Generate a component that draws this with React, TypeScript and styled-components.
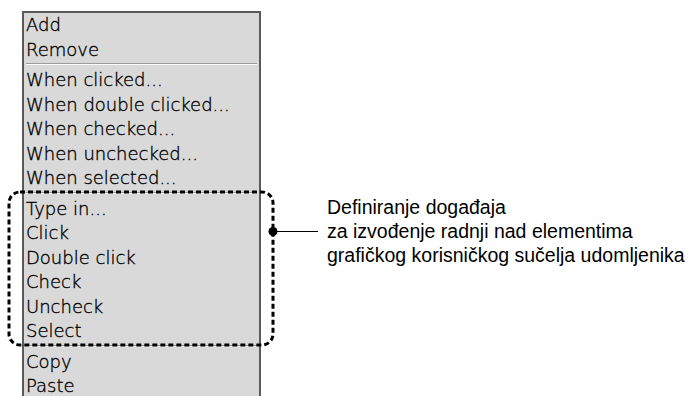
import styled, { createGlobalStyle } from 'styled-components';

const GlobalStyle = createGlobalStyle`
  html, body {
    margin: 0;
    padding: 0;
    background: #fff;
  }
  body {
    width: 694px;
    height: 396px;
    overflow: hidden;
  }
`;

type Entry = { label: string } | { separator: true };

const entries: Entry[] = [
  { label: 'Add' },
  { label: 'Remove' },
  { separator: true },
  { label: 'When clicked...' },
  { label: 'When double clicked...' },
  { label: 'When checked...' },
  { label: 'When unchecked...' },
  { label: 'When selected...' },
  { separator: true },
  { label: 'Type in...' },
  { label: 'Click' },
  { label: 'Double click' },
  { label: 'Check' },
  { label: 'Uncheck' },
  { label: 'Select' },
  { separator: true },
  { label: 'Copy' },
  { label: 'Paste' },
];

const App = () => {
  return (
    <>
      <GlobalStyle />
      <Page>
        <Menu>
          {entries.map((entry, i) =>
            'separator' in entry ? (
              <Separator key={i} />
            ) : (
              <MenuItem key={i}>{entry.label}</MenuItem>
            )
          )}
        </Menu>

        <GroupOutline width="268" height="157" viewBox="0 0 268 157">
          <rect
            x="2"
            y="2"
            width="264"
            height="153"
            rx="11"
            ry="11"
            fill="none"
            stroke="#000"
            strokeWidth="3"
            strokeDasharray="5 3"
          />
        </GroupOutline>

        <Note>
          <Connector width="50" height="11" viewBox="0 0 50 11">
            <circle cx="5" cy="5.5" r="4.5" fill="#000" />
            <line x1="5" y1="5.5" x2="50" y2="5.5" stroke="#000" strokeWidth="1" />
          </Connector>
          <NoteText>
            Definiranje događaja
            <br />
            za izvođenje radnji nad elementima
            <br />
            grafičkog korisničkog sučelja udomljenika
          </NoteText>
        </Note>
      </Page>
    </>
  );
};

export default App;

const Page = styled.div`
  position: relative;
  display: flex;
  align-items: flex-start;
  width: 694px;
  height: 396px;
  overflow: hidden;
`;

const Menu = styled.div`
  box-sizing: border-box;
  width: 239px;
  height: 385px;
  margin: 11px 0 0 22px;
  display: flex;
  flex-direction: column;
  background: #d9d9d9;
  border: 2px solid #5a5a5a;
  border-bottom: none;
  font-family: 'DejaVu Sans', sans-serif;
  font-weight: 200;
  font-size: 18px;
  color: #000;
  -webkit-text-stroke: 0.35px #000;
`;

const MenuItem = styled.div`
  flex: none;
  height: 24.5px;
  line-height: 24.5px;
  padding-left: 2px;
  white-space: nowrap;
`;

const Separator = styled.div`
  flex: none;
  height: 6px;
  margin: 0 2px;
  box-sizing: border-box;
  padding-top: 1px;

  &::before {
    content: '';
    display: block;
    height: 1px;
    background: #9c9c9c;
    border-bottom: 1px solid #fafafa;
  }
`;

const GroupOutline = styled.svg`
  position: absolute;
  left: 7px;
  top: 190px;
  pointer-events: none;
`;

const Note = styled.div`
  display: flex;
  align-items: center;
  margin: 195px 0 0 7px;
`;

const Connector = styled.svg`
  flex: none;
  display: block;
`;

const NoteText = styled.div`
  margin-left: 9px;
  font-family: 'Liberation Sans', Arial, sans-serif;
  font-size: 19.5px;
  line-height: 24px;
  color: #000;
  white-space: nowrap;
`;
